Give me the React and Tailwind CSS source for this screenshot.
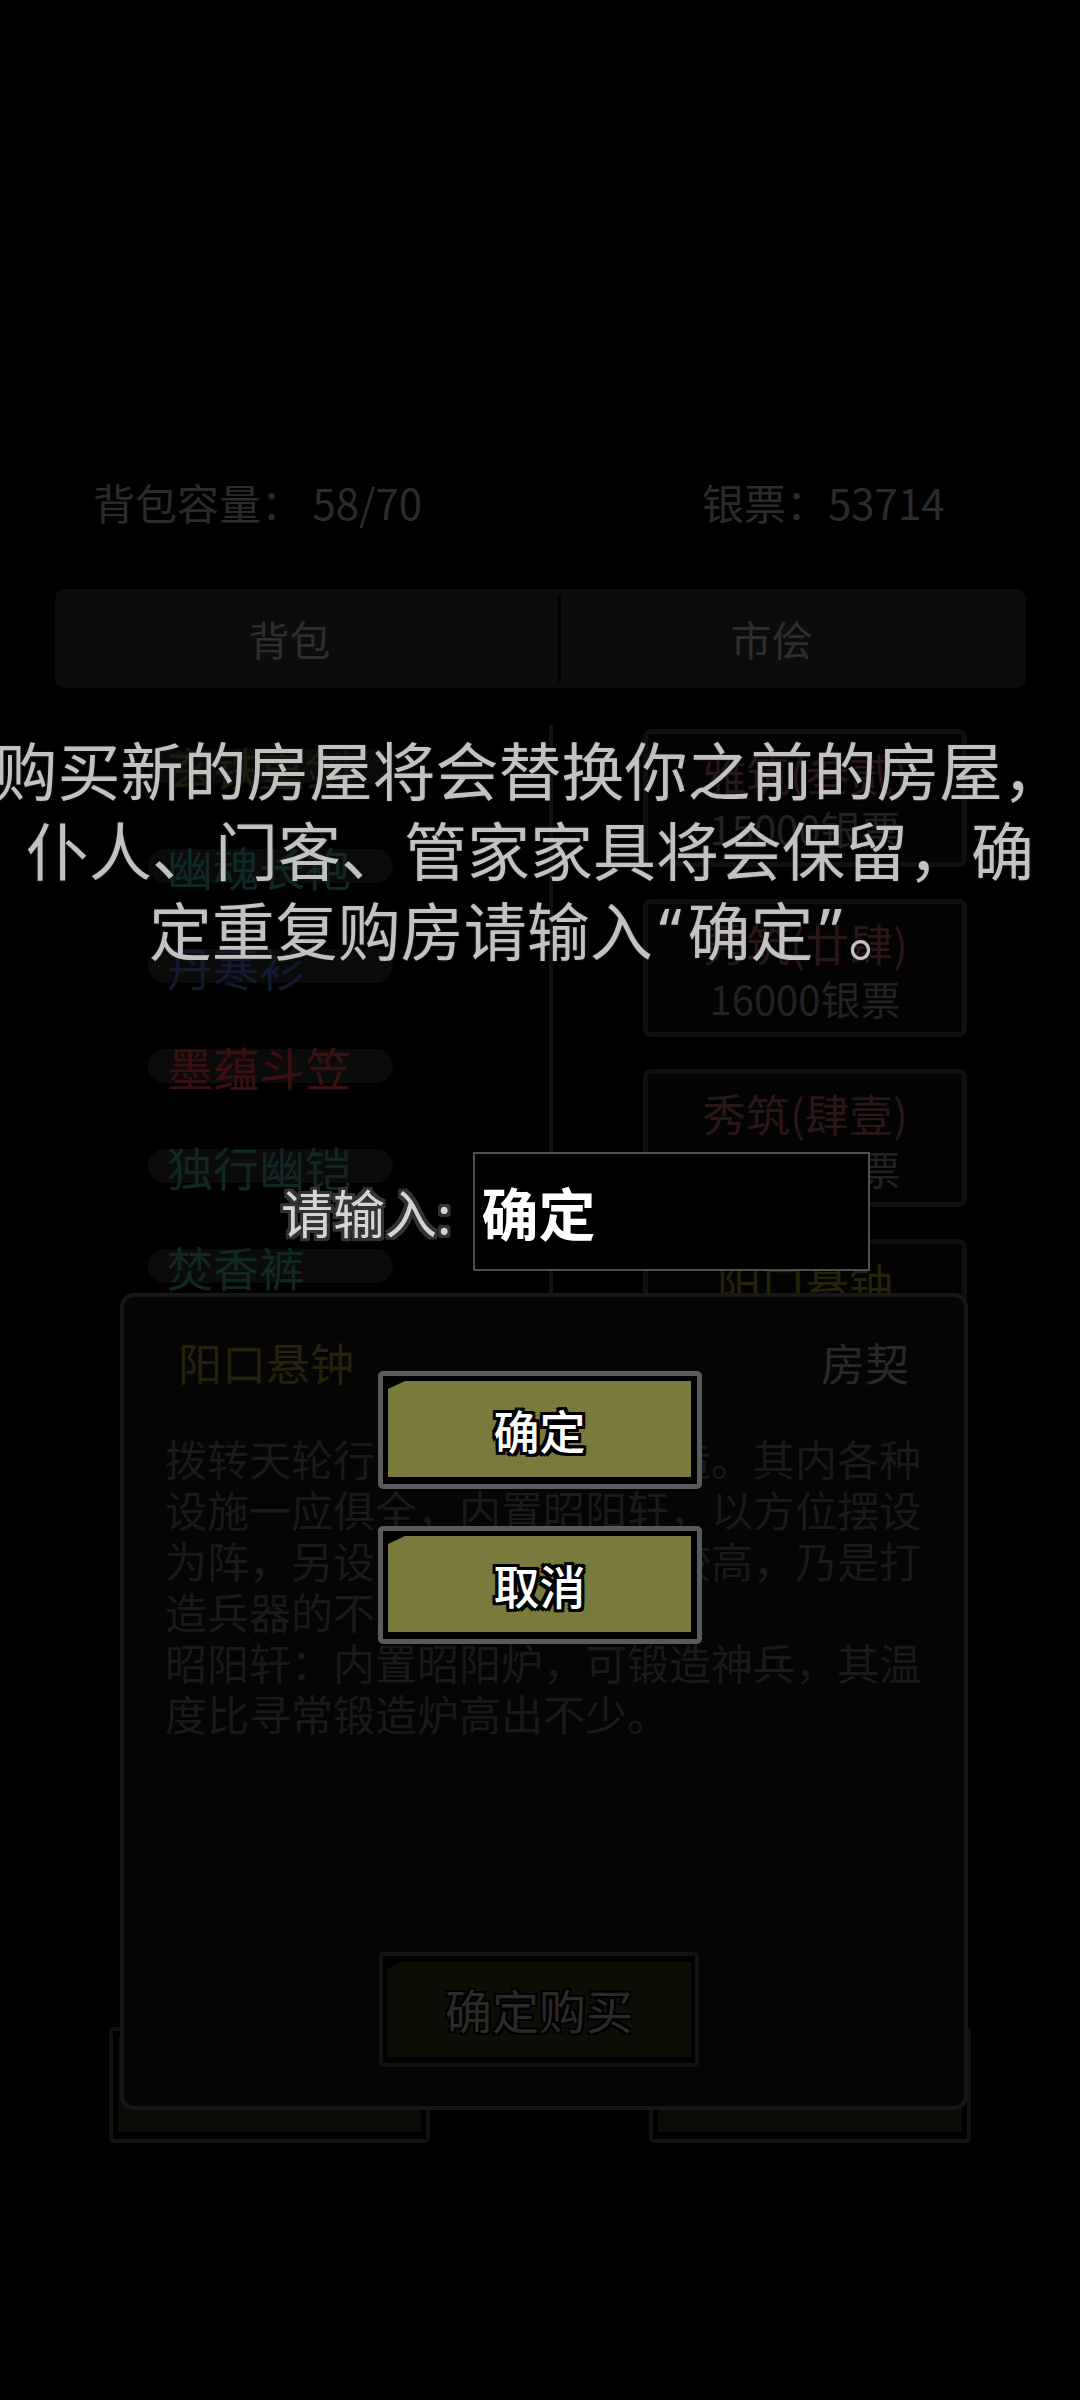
export default function App() {
  const leftItems = [
    { t: '玄铁重剑', c: 'text-[#1f1c0b]' },
    { t: '幽魂长袍', c: 'text-[#0e2a26]' },
    { t: '丹寒衫', c: 'text-[#121b31]' },
    { t: '墨蕴斗笠', c: 'text-[#3b0f0f]' },
    { t: '独行幽铠', c: 'text-[#102824]' },
    { t: '焚香裤', c: 'text-[#102824]' },
  ];
  const cards = [
    { t: '雅筑(叁贰)', p: '15000银票', c: 'text-[#2b1618]' },
    { t: '秀筑(廿肆)', p: '16000银票', c: 'text-[#2b1618]' },
    { t: '秀筑(肆壹)', p: '16000银票', c: 'text-[#2b1618]' },
    { t: '阳口悬钟', p: '', c: 'text-[#27220a]' },
  ];
  const desc = [
    '拨转天轮行大候工匠精心打造。其内各种',
    '设施一应俱全，内置昭阳轩，以方位摆设',
    '为阵，另设昭阳炉，此炉温较高，乃是打',
    '造兵器的不二之选。',
    '昭阳轩：内置昭阳炉，可锻造神兵，其温',
    '度比寻常锻造炉高出不少。',
  ];

  return (
    <div className="relative w-[1080px] h-[2400px] overflow-hidden bg-black font-['Noto_Sans_CJK_SC','Noto_Sans',sans-serif]">
      {/* Background game screen (dimmed) */}
      <div className="flex flex-col pt-[478px]">
        {/* stats */}
        <div className="flex pl-[93px] text-[42px] leading-[48px] text-[#2b2b2b]">
          <span className="w-[609px] whitespace-nowrap">背包容量： 58/70</span>
          <span className="whitespace-nowrap">银票：53714</span>
        </div>

        {/* tabs */}
        <div className="mt-[63px] ml-[55px] flex h-[99px] w-[971px] rounded-[10px] bg-[#0c0c0c] text-[41px] text-[#2e2e2e]">
          <div className="flex w-[503px] items-center justify-center pr-[34px]">背包</div>
          <div className="my-[6px] w-[3px] bg-[#020202]" />
          <div className="flex flex-1 items-center justify-center pr-[44px]">市侩</div>
        </div>

        {/* list + cards */}
        <div className="mt-[28px] flex h-[1311px]">
          <div className="flex w-[549px] flex-col pl-[148px]">
            {leftItems.map((it) => (
              <div key={it.t} className="flex h-[100px] items-center">
                <div className={`flex h-[34px] w-[245px] items-center rounded-full bg-[#0b0b0b] pl-[19px] text-[46px] leading-none whitespace-nowrap ${it.c}`}>
                  {it.t}
                </div>
              </div>
            ))}
          </div>
          <div className="mt-[9px] h-[1290px] w-[4px] bg-[#111111]" />
          <div className="ml-[90px] flex w-[324px] flex-col gap-[32px] pt-[13px]">
            {cards.map((cd) => (
              <div key={cd.t} className="flex h-[138px] flex-col items-center rounded-[8px] border-[5px] border-[#101010] bg-[#030303] pt-[13px]">
                <div className={`text-[44px] leading-[52px] whitespace-nowrap ${cd.c}`}>{cd.t}</div>
                <div className="mt-[5px] text-[40px] leading-[48px] text-[#222222] whitespace-nowrap">{cd.p}</div>
              </div>
            ))}
          </div>
        </div>

        {/* bottom buttons (behind panel) */}
        <div className="flex gap-[219px] pl-[109px]">
          <div className="h-[116px] w-[321px] rounded-[5px] border-[4px] border-[#111111] bg-black px-[5px] pt-[6px] pb-[7px]">
            <div className="h-full w-full bg-[#0c0c06]" />
          </div>
          <div className="h-[116px] w-[322px] rounded-[5px] border-[4px] border-[#111111] bg-black px-[5px] pt-[6px] pb-[7px]">
            <div className="h-full w-full bg-[#0c0c06]" />
          </div>
        </div>
      </div>

      {/* Item detail panel (over the list) */}
      <div className="absolute left-[120px] top-[1293px] flex h-[817px] w-[848px] flex-col rounded-[14px] border-[4px] border-[#171717] bg-[#050505] pb-[39px]">
        <div className="flex justify-between pt-[41px] pl-[54px] pr-[55px] text-[44px] leading-[48px]">
          <span className="text-[#27210a]">阳口悬钟</span>
          <span className="text-[#292929]">房契</span>
        </div>
        <div className="mt-[46px] pl-[41px] text-[42px] leading-[51px] text-[#1a1a1a]">
          {desc.map((l) => (
            <div key={l} className="whitespace-nowrap">{l}</div>
          ))}
        </div>
        <div className="mt-auto ml-[255px] h-[115px] w-[320px] rounded-[5px] border-[4px] border-[#131313] bg-black px-[4px] pt-[6px] pb-[6px]">
          <div className="flex h-full w-full items-center justify-center bg-[#0e0e07] text-[47px] text-[#2a2a2a] [clip-path:polygon(14px_0,100%_0,100%_100%,0_100%,0_7px)] [text-shadow:-2px_-2px_0_#000,2px_-2px_0_#000,-2px_2px_0_#000,2px_2px_0_#000]">
            确定购买
          </div>
        </div>
      </div>

      {/* Confirmation overlay */}
      <div className="absolute inset-0 flex flex-col items-center pt-[728px]">
        <div className="mr-[20px] flex w-[1060px] flex-col items-center text-[63px] leading-[80px] text-[#c2c2c2] [text-shadow:0_0_3px_#1c1c1c,0_0_2px_#1c1c1c]">
          <div className="whitespace-nowrap">购买新的房屋将会替换你之前的房屋，</div>
          <div className="whitespace-nowrap">仆人、门客、管家家具将会保留，确</div>
          <div className="whitespace-nowrap">
            定重复购房请输入<span className="px-[6px] font-['Noto_Sans',sans-serif]">“</span>确定<span className="px-[6px] font-['Noto_Sans',sans-serif]">”</span>。
          </div>
        </div>

        <div className="mt-[181px] ml-[281px] flex items-center gap-[22px] self-start">
          <span className="whitespace-nowrap text-[52px] leading-none text-[#d4d4d4] [text-shadow:-3px_-3px_0_#333,3px_-3px_0_#333,-3px_3px_0_#333,3px_3px_0_#333,0_3px_0_#333,0_-3px_0_#333,3px_0_0_#333,-3px_0_0_#333]">
            请输入:
          </span>
          <div className="flex h-[119px] w-[397px] items-center border-2 border-[#4f4f4f] bg-black pl-[6px]">
            <span className="text-[57px] font-bold leading-none text-white">确定</span>
          </div>
        </div>

        <div className="mt-[100px] flex flex-col items-center gap-[37px]">
          {['确定', '取消'].map((label) => (
            <div key={label} className="h-[118px] w-[324px] rounded-[5px] border-[5px] border-[#5a5a5a] bg-black pt-[5px] pl-[5px] pr-[6px] pb-[7px]">
              <div className="flex h-full w-full items-center justify-center bg-[#7a7a3c] text-[46px] font-medium leading-none text-white [clip-path:polygon(17px_0,100%_0,100%_100%,0_100%,0_8px)] [text-shadow:-3px_-3px_0_#000,3px_-3px_0_#000,-3px_3px_0_#000,3px_3px_0_#000,0_3px_0_#000,0_-3px_0_#000,3px_0_0_#000,-3px_0_0_#000]">
                {label}
              </div>
            </div>
          ))}
        </div>
      </div>
    </div>
  );
}
